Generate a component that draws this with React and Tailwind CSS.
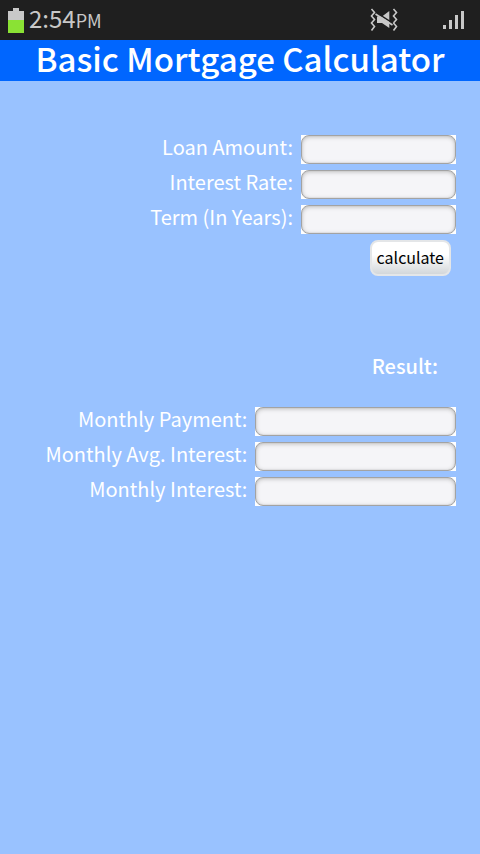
function BatteryIcon() {
  return (
    <svg className="h-[25px] w-4" viewBox="0 0 16 25" shapeRendering="crispEdges" aria-hidden="true">
      <path d="M5 0h6v3h5v9H0V3h5z" fill="#c8c8c8" />
      <path d="M0 12h16v13H0z" fill="#8ae234" />
    </svg>
  )
}

function VibrateMuteIcon() {
  return (
    <svg className="h-6 w-7" viewBox="0 0 28 24" fill="none" stroke="#c8c8c8" strokeWidth="1.6" aria-hidden="true">
      <path d="M1.500 1l3 3.500-3 3.500 3 3.500-3 3.500 3 3.500-3 4" />
      <path d="M23.500 1l3 3.500-3 3.500 3 3.500-3 3.500 3 3.500-3 4" />
      <path d="M7 8.500h5L19.300 3v17L12 15H7z" fill="#c8c8c8" stroke="none" />
      <path d="M6 4.400l17 11" stroke="#1f1f1f" />
      <path d="M5.500 6l17 11" />
    </svg>
  )
}

function SignalIcon() {
  return (
    <svg className="h-[18px] w-[21px]" viewBox="0 0 21 18" fill="#c8c8c8" shapeRendering="crispEdges" aria-hidden="true">
      <path d="M0 14h3v4H0zM6 9h3v9H6zM12 4h3v14h-3zM18 0h3v18h-3z" />
    </svg>
  )
}

function StatusBar() {
  return (
    <div className="flex h-10 items-center bg-[#1f1f1f] pl-2 pr-4 text-[#c8c8c8]">
      <BatteryIcon />
      <p className="ml-[5px] pb-1 text-2xl leading-9">
        2:54<span className="text-lg leading-none">PM</span>
      </p>
      <div className="ml-auto flex items-center gap-[45px]">
        <VibrateMuteIcon />
        <SignalIcon />
      </div>
    </div>
  )
}

function Field({ id, label, wide, readOnly }) {
  return (
    <div className="flex items-start justify-end gap-2">
      <label htmlFor={id} className="text-xl leading-6">
        {label}
      </label>
      <div className={wide ? 'h-[29px] w-[44%] bg-white' : 'h-[29px] w-[34%] bg-white'}>
        <input
          id={id}
          type="text"
          readOnly={readOnly}
          className="block h-full w-full rounded-lg border border-[#a3a3a3] bg-[#f5f5f8] px-2 text-base text-black shadow-[inset_0_0_1px_#a3a3a3,inset_0_1px_4px_#bdbdbd] outline-none"
        />
      </div>
    </div>
  )
}

export default function App() {
  return (
    <div className="min-h-screen bg-[#99c2ff] font-['Noto_Sans_CJK_KR',sans-serif] text-white">
      <StatusBar />
      <h1 className="bg-[#0066ff] pb-1 text-center text-[33px] font-medium leading-[37px]">
        Basic Mortgage Calculator
      </h1>

      <main className="pt-[54px]">
        <form className="flex flex-col gap-[6px] pr-6" onSubmit={(e) => e.preventDefault()}>
          <Field id="loan" label="Loan Amount:" />
          <Field id="rate" label="Interest Rate:" />
          <Field id="term" label="Term (In Years):" />
          <button
            type="submit"
            className="mr-[5px] h-9 self-end rounded-lg border-2 border-[#e4e6e8] bg-linear-to-b from-white from-40% to-[#d3d7da] px-[5px] pb-[2px] text-base leading-[30px] text-black"
          >
            calculate
          </button>
        </form>

        <h2 className="mt-[78px] pr-[42px] text-right text-xl font-medium leading-6">Result:</h2>

        <section className="mt-[29px] flex flex-col gap-[6px] pr-6">
          <Field id="payment" label="Monthly Payment:" wide readOnly />
          <Field id="avg-interest" label="Monthly Avg. Interest:" wide readOnly />
          <Field id="interest" label="Monthly Interest:" wide readOnly />
        </section>
      </main>
    </div>
  )
}
